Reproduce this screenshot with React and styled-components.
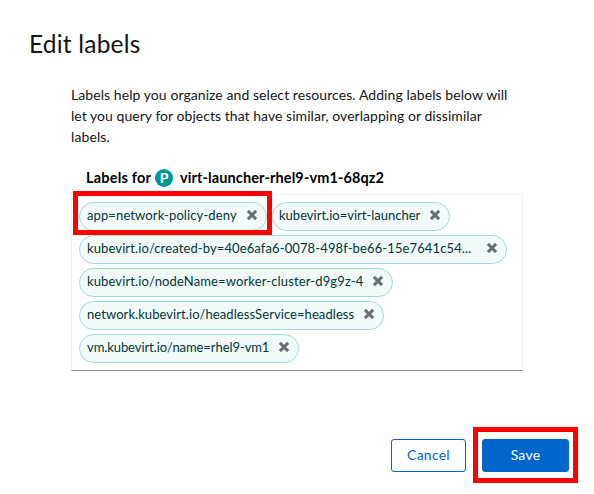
import React from 'react';
import styled, { createGlobalStyle } from 'styled-components';

const GlobalStyle = createGlobalStyle`
  * { box-sizing: border-box; }
  body {
    margin: 0;
    background: #fff;
    color: #151515;
    font-family: "Lato", "Noto Sans", sans-serif;
  }
`;

const Dialog = styled.main`
  display: flex;
  flex-direction: column;
  width: 594px;
  height: 494px;
  padding: 28px 16px 0 29px;
`;

const Title = styled.h1`
  margin: 0;
  font-size: 24.5px;
  line-height: 32px;
  font-weight: 400;
  letter-spacing: 0.2px;
`;

const Body = styled.section`
  width: 452px;
  margin: 24px 0 0 42px;
`;

const Description = styled.p`
  margin: 0;
  font-size: 14px;
  line-height: 21px;
`;

const Line = styled.span`
  display: block;
  white-space: nowrap;
  letter-spacing: ${(p) => p.$spacing}px;
`;

const FieldLabel = styled.div`
  display: flex;
  align-items: center;
  height: 20px;
  margin-top: 21px;
  padding-left: 15px;
  color: #000;
  font-size: 14.5px;
  line-height: 18px;
  font-weight: 700;
  letter-spacing: 0.11px;
  white-space: nowrap;
`;

const LabelPrefix = styled.span`
  width: 69px;
  padding-bottom: 1px;
  letter-spacing: 0.2px;
`;

const Badge = styled.span`
  display: flex;
  align-items: center;
  justify-content: center;
  width: 18px;
  height: 18px;
  margin-right: 7px;
  border-radius: 50%;
  background: #009596;
  color: #fff;
  font-size: 14px;
  line-height: 18px;
  font-weight: 700;
  letter-spacing: 0;
`;

const ResourceName = styled.span`
  padding-bottom: 1px;
`;

const TagField = styled.div`
  display: flex;
  flex-wrap: wrap;
  align-content: flex-start;
  gap: 4px 5px;
  height: 177px;
  margin-top: 6px;
  padding: 7px;
  border: 1px solid #f0f0f0;
  border-bottom-color: #8a8d90;
`;

const Chip = styled.div`
  position: relative;
  display: flex;
  justify-content: space-between;
  width: ${(p) => p.$width}px;
  height: 29px;
  padding: 0 8px 0 ${(p) => p.$start}px;
  border: 1px solid #a2d9d9;
  border-radius: 15px;
  background: #f2f9f9;
`;

const ChipText = styled.span`
  color: #003737;
  font-size: 13px;
  line-height: 25px;
  letter-spacing: ${(p) => p.$spacing}px;
  white-space: nowrap;
`;

const RemoveButton = styled.button`
  display: flex;
  width: 12px;
  height: 12px;
  margin-top: 6px;
  padding: 0;
  border: 0;
  background: none;
  color: #6a6e73;
`;

const Highlight = styled.div`
  position: absolute;
  inset: ${(p) => p.$inset};
  border: 5px solid #f00;
  pointer-events: none;
`;

const Footer = styled.footer`
  display: flex;
  justify-content: flex-end;
  gap: 16px;
  margin-top: 68px;
  padding-right: 9px;
`;

const ButtonSlot = styled.div`
  position: relative;
`;

const Button = styled.button`
  width: ${(p) => (p.$primary ? 87 : 75)}px;
  height: 33px;
  padding: 0 0 2px;
  border: 1px solid #06c;
  border-radius: 3px;
  background: ${(p) => (p.$primary ? '#06c' : '#fff')};
  color: ${(p) => (p.$primary ? '#fff' : '#06c')};
  font: 400 14px/29px "Lato", "Noto Sans", sans-serif;
  letter-spacing: 0.25px;
`;

const labels = [
  { text: 'app=network-policy-deny', width: 188, spacing: 0.11, start: 7, highlighted: true },
  { text: 'kubevirt.io=virt-launcher', width: 178, spacing: 0, start: 6 },
  { text: 'kubevirt.io/created-by=40e6afa6-0078-498f-be66-15e7641c54...', width: 428, spacing: 0.115, start: 7 },
  { text: 'kubevirt.io/nodeName=worker-cluster-d9g9z-4', width: 314, spacing: 0.13, start: 7 },
  { text: 'network.kubevirt.io/headlessService=headless', width: 305, spacing: 0.07, start: 7 },
  { text: 'vm.kubevirt.io/name=rhel9-vm1', width: 220, spacing: -0.08, start: 7 },
];

function CloseIcon() {
  return (
    <svg width="12" height="12" viewBox="0 0 12 12" aria-hidden="true">
      <path d="M1.9 1.9 10.1 10.1M10.1 1.9 1.9 10.1" stroke="currentColor" strokeWidth="2.9" />
    </svg>
  );
}

export default function App() {
  return (
    <>
      <GlobalStyle />
      <Dialog>
        <Title>Edit labels</Title>
        <Body>
          <Description>
            <Line $spacing={0.07}>Labels help you organize and select resources. Adding labels below will </Line>
            <Line $spacing={0.04}>let you query for objects that have similar, overlapping or dissimilar </Line>
            <Line $spacing={0.1}>labels.</Line>
          </Description>
          <FieldLabel>
            <LabelPrefix>Labels for</LabelPrefix>
            <Badge>P</Badge>
            <ResourceName>virt-launcher-rhel9-vm1-68qz2</ResourceName>
          </FieldLabel>
          <TagField>
            {labels.map((label) => (
              <Chip key={label.text} $width={label.width} $start={label.start}>
                <ChipText $spacing={label.spacing}>{label.text}</ChipText>
                <RemoveButton aria-label={`Remove ${label.text}`}>
                  <CloseIcon />
                </RemoveButton>
                {label.highlighted && <Highlight $inset="-12px -6px -5px -7px" />}
              </Chip>
            ))}
          </TagField>
        </Body>
        <Footer>
          <Button>Cancel</Button>
          <ButtonSlot>
            <Button $primary>Save</Button>
            <Highlight $inset="-12px -9px -11px -9px" />
          </ButtonSlot>
        </Footer>
      </Dialog>
    </>
  );
}
